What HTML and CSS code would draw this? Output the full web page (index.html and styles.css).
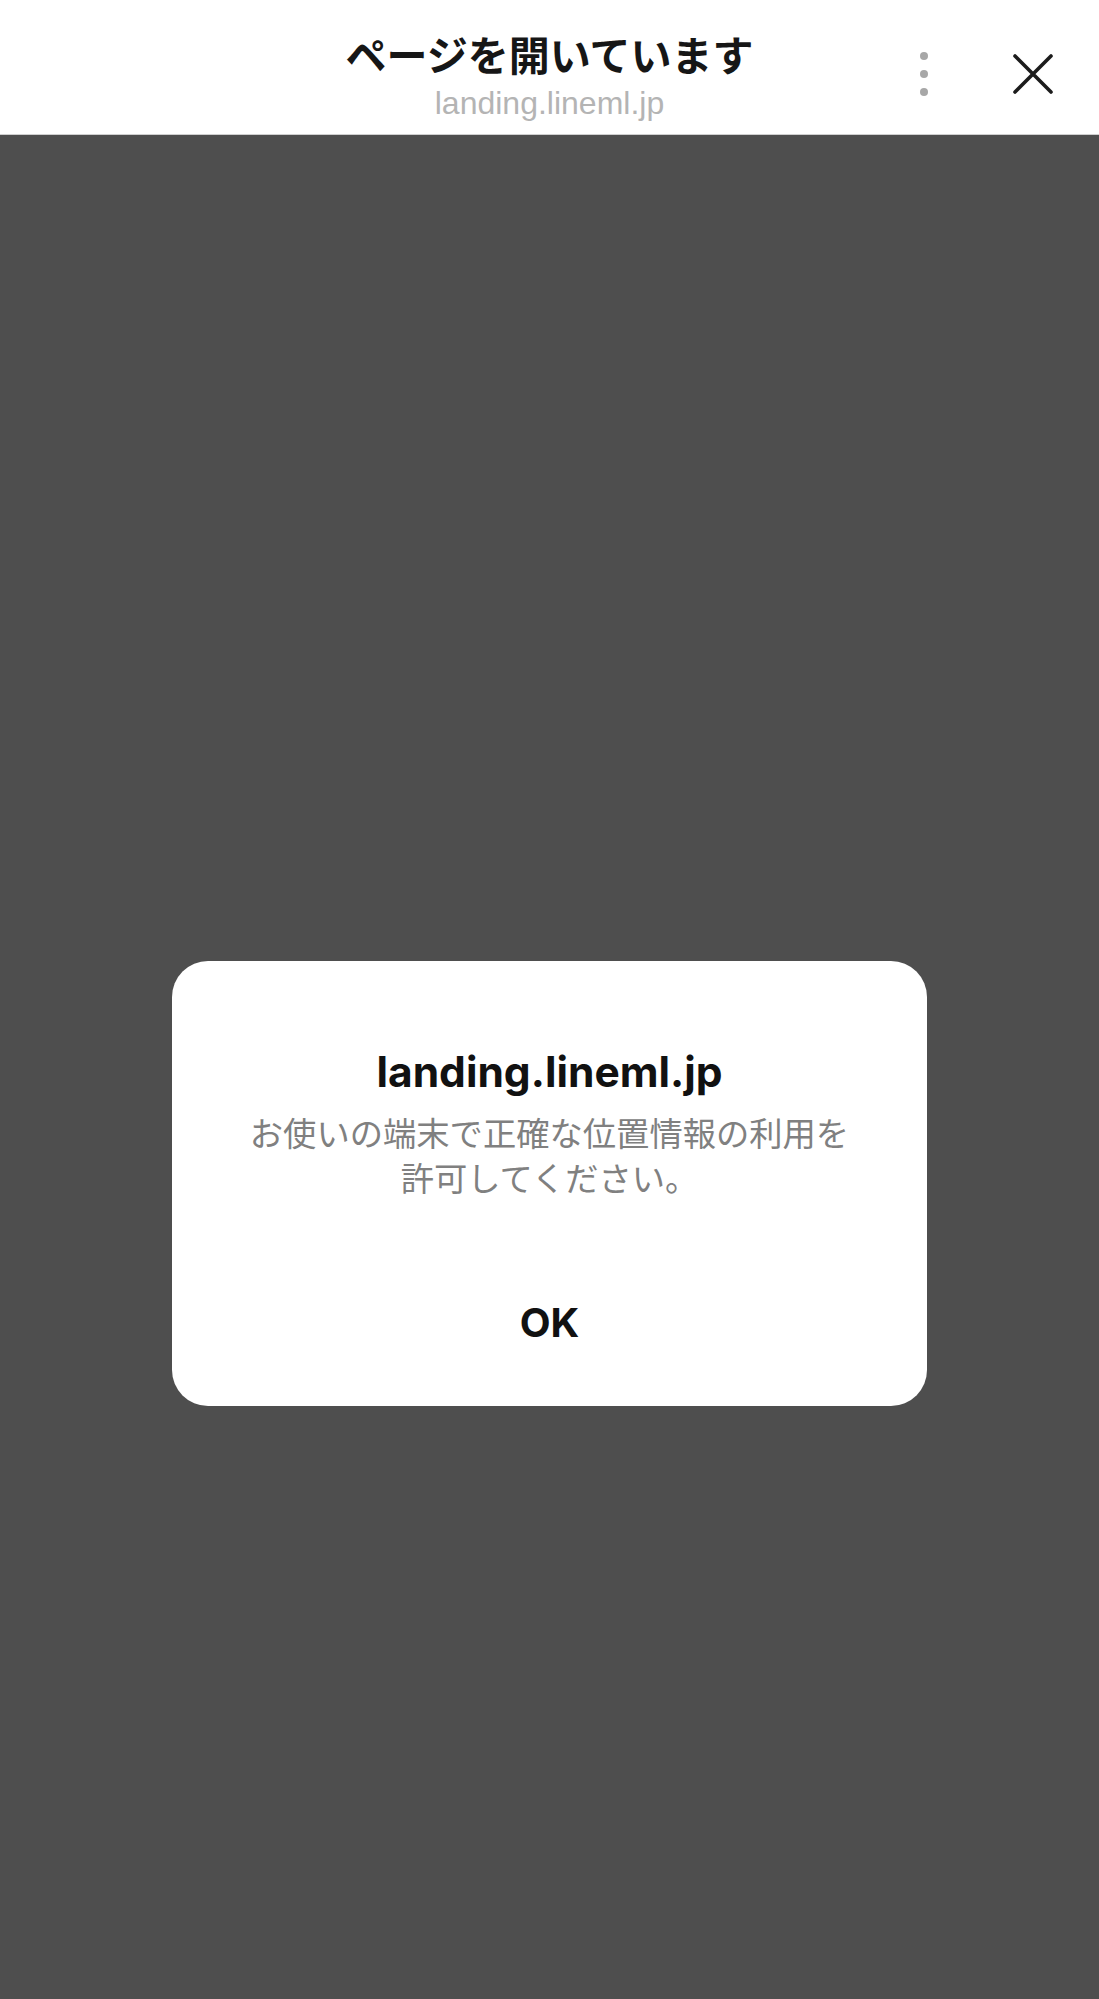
FILE: index.html
```html
<!DOCTYPE html>
<html lang="ja">
<head>
<meta charset="utf-8">
<title>ページを開いています</title>
<link rel="stylesheet" href="styles.css">
</head>
<body>
<div class="app">
  <header class="topbar">
    <div class="spacer"></div>
    <div class="heading">
      <div class="title">ページを開いています</div>
      <div class="url">landing.lineml.jp</div>
    </div>
    <div class="actions">
      <svg class="more" width="16" height="48" viewBox="0 0 16 48" aria-label="more">
        <circle cx="8" cy="6" r="4"/>
        <circle cx="8" cy="24" r="4"/>
        <circle cx="8" cy="42" r="4"/>
      </svg>
      <svg class="close" width="48" height="48" viewBox="0 0 48 48" aria-label="close">
        <path d="M6 6 L42 42 M42 6 L6 42"/>
      </svg>
    </div>
  </header>
  <main class="overlay">
    <div class="dialog">
      <div class="dialog-title">landing.lineml.jp</div>
      <div class="dialog-body">お使いの端末で正確な位置情報の利用を<br>許可してください。</div>
      <div class="dialog-button">OK</div>
    </div>
  </main>
</div>
</body>
</html>
```

FILE: styles.css
```css
html, body {
  margin: 0;
  padding: 0;
  background: #4e4e4e;
}

.app {
  display: flex;
  flex-direction: column;
  min-height: 1999px;
}

.topbar {
  display: grid;
  grid-template-columns: 1fr auto 1fr;
  height: 134px;
  background: #ffffff;
  border-bottom: 1px solid #cfcfcf;
  box-sizing: content-box;
}

.heading {
  display: flex;
  flex-direction: column;
  align-items: center;
  padding-top: 29px;
}

.title {
  font-family: "Noto Sans CJK JP", sans-serif;
  font-weight: 700;
  font-size: 41px;
  line-height: 48px;
  color: #161616;
}

.url {
  margin-top: 6px;
  font-family: "Liberation Sans", Arial, sans-serif;
  font-size: 32px;
  line-height: 40px;
  color: #b4b4b4;
}

.actions {
  display: flex;
  align-items: center;
  justify-content: flex-end;
  align-self: start;
  gap: 77px;
  padding-top: 50px;
  padding-right: 42px;
}

.more {
  fill: #a7a7a7;
}

.close {
  stroke: #1c1c1c;
  stroke-width: 3.6;
  stroke-linecap: round;
  fill: none;
}

.overlay {
  flex: 1;
  background: #4e4e4e;
  padding-top: 826px;
}

.dialog {
  width: 755px;
  margin: 0 auto;
  box-sizing: border-box;
  background: #ffffff;
  border-radius: 36px;
  padding: 85px 20px 58px;
  text-align: center;
}

.dialog-title {
  font-family: Inter, "Liberation Sans", sans-serif;
  font-weight: 700;
  font-size: 42.5px;
  line-height: 52px;
  color: #111111;
}

.dialog-body {
  margin-top: 11px;
  font-family: "Noto Sans CJK JP", sans-serif;
  font-size: 33.3px;
  line-height: 45px;
  color: #808080;
}

.dialog-button {
  margin-top: 99px;
  font-family: Inter, "Liberation Sans", sans-serif;
  font-weight: 700;
  font-size: 40px;
  line-height: 50px;
  color: #111111;
}
```
